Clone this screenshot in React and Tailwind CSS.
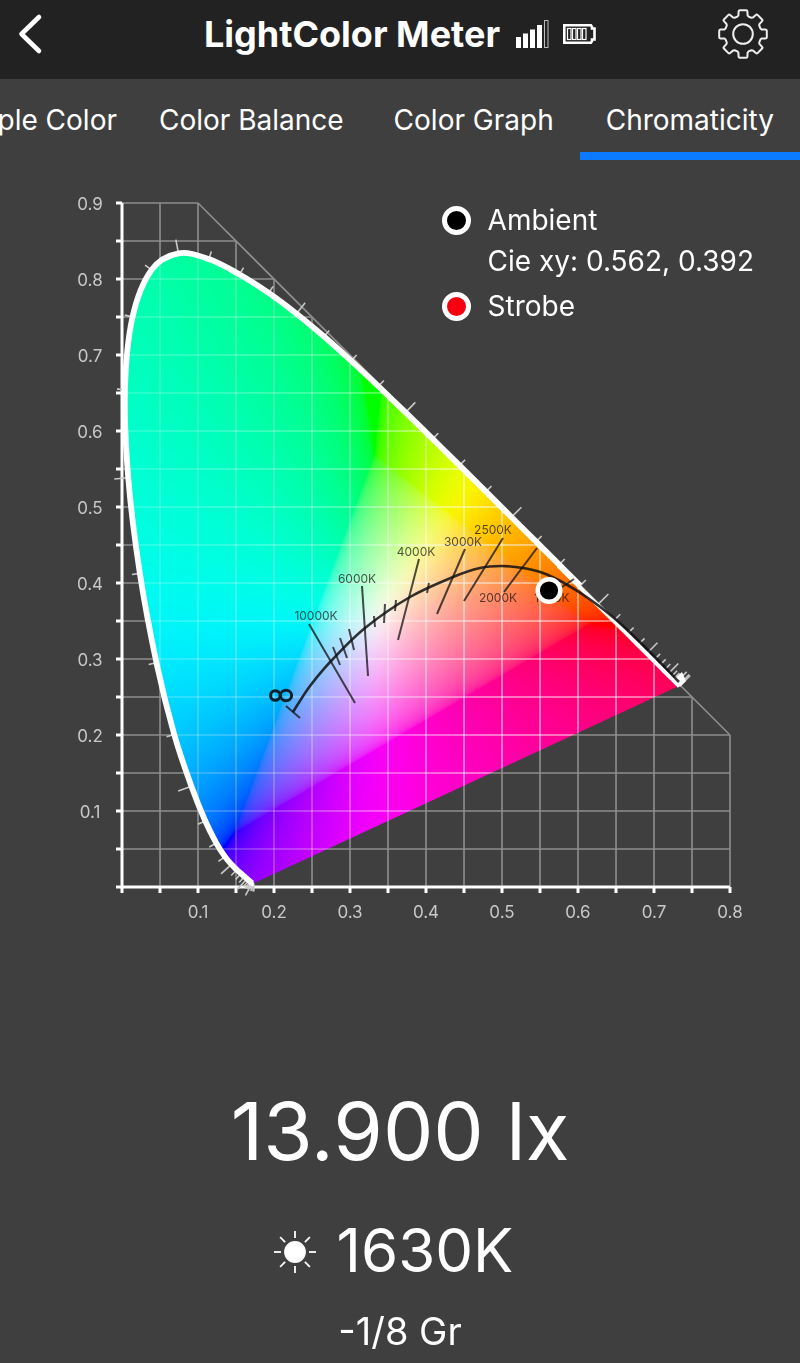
import { useEffect, useRef } from 'react'

// Chart area in drawing units, one diagram unit of 0.1 is 76 units long
const VIEW = { x: 0, y: 160, width: 800, height: 780 }
const ORIGIN = { x: 122, y: 887 }
const UNIT = 760

const px = (x) => ORIGIN.x + x * UNIT
const py = (y) => ORIGIN.y - y * UNIT

// CIE 1931 spectral locus: wavelength, x, y
const LOCUS = [
  [400, 0.1733, 0.0048], [405, 0.173, 0.0048], [410, 0.1726, 0.0048], [415, 0.1721, 0.0048],
  [420, 0.1714, 0.0051], [425, 0.1703, 0.0058], [430, 0.1689, 0.0069], [435, 0.1669, 0.0086],
  [440, 0.1644, 0.0109], [445, 0.1611, 0.0138], [450, 0.1566, 0.0177], [455, 0.151, 0.0227],
  [460, 0.144, 0.0297], [465, 0.1355, 0.0399], [470, 0.1241, 0.0578], [475, 0.1096, 0.0868],
  [480, 0.0913, 0.1327], [485, 0.0687, 0.2007], [490, 0.0454, 0.295], [495, 0.0235, 0.4127],
  [500, 0.0082, 0.5384], [505, 0.0039, 0.6548], [510, 0.0139, 0.7502], [515, 0.0389, 0.812],
  [520, 0.0743, 0.8338], [525, 0.1142, 0.8262], [530, 0.1547, 0.8059], [535, 0.1929, 0.7816],
  [540, 0.2296, 0.7543], [545, 0.2658, 0.7243], [550, 0.3016, 0.6923], [555, 0.3373, 0.6589],
  [560, 0.3731, 0.6245], [565, 0.4087, 0.5896], [570, 0.4441, 0.5547], [575, 0.4788, 0.5202],
  [580, 0.5125, 0.4866], [585, 0.5448, 0.4544], [590, 0.5752, 0.4242], [595, 0.6029, 0.3965],
  [600, 0.627, 0.3725], [605, 0.6482, 0.3514], [610, 0.6658, 0.334], [615, 0.6801, 0.3197],
  [620, 0.6915, 0.3083], [625, 0.7006, 0.2993], [630, 0.7079, 0.292], [635, 0.714, 0.2859],
  [640, 0.719, 0.2809], [645, 0.723, 0.277], [650, 0.726, 0.274], [660, 0.73, 0.27],
  [680, 0.7334, 0.2666], [700, 0.7347, 0.2653],
]

const POINTS = LOCUS.map(([, x, y]) => [px(x), py(y)])

// Smooth curve through all points (Catmull-Rom as bezier segments)
function curve(points) {
  let d = `M${points[0][0]} ${points[0][1]}`
  for (let i = 0; i < points.length - 1; i++) {
    const a = points[i - 1] || points[i]
    const b = points[i]
    const c = points[i + 1]
    const e = points[i + 2] || c
    d += `C${b[0] + (c[0] - a[0]) / 6} ${b[1] + (c[1] - a[1]) / 6} ${c[0] - (e[0] - b[0]) / 6} ${c[1] - (e[1] - b[1]) / 6} ${c[0]} ${c[1]}`
  }
  return d
}

const SPLIT = LOCUS.findIndex((p) => p[0] === 595)
const LOCUS_PATH = curve(POINTS)
const WIDE_PATH = curve(POINTS.slice(0, SPLIT + 1))
const NARROW_PATH = curve(POINTS.slice(SPLIT - 1).map(([x, y]) => [x - 1, y + 1]))

// Wavelength marks, pointing away from the coloured area
const LOCUS_TICKS = LOCUS.map(([nm], i) => {
  const a = POINTS[Math.max(0, i - 1)]
  const b = POINTS[Math.min(POINTS.length - 1, i + 1)]
  const length = Math.hypot(b[0] - a[0], b[1] - a[1]) || 1
  const nx = (b[1] - a[1]) / length
  const ny = -(b[0] - a[0]) / length
  const size = nm % 20 === 0 && nm > 400 ? 14 : 8
  const [x, y] = POINTS[i]
  return { nm, x1: x, y1: y, x2: x + nx * size, y2: y + ny * size }
})

const BLACKBODY = [
  [293, 712], [310, 686], [332, 660], [365, 628], [410, 597], [453, 577], [480, 568], [501, 566],
  [523, 568], [543, 573], [564, 583], [588, 598], [614, 618], [645, 647], [679, 682],
]

const ISOTHERMS = [
  [286, 706, 300, 718], [309, 624, 355, 703], [362, 586, 368, 676], [419, 559, 398, 640],
  [465, 549, 437, 614], [503, 538, 464, 601], [537, 548, 504, 592], [574, 579, 556, 591],
  [333, 647, 340, 665], [340, 638, 347, 658], [349, 629, 354, 650], [374, 616, 375, 627],
  [385, 604, 384, 623], [396, 600, 395, 611], [429, 583, 427, 593],
]

const KELVINS = [
  { label: '10000K', x: 316, y: 620 },
  { label: '6000K', x: 357, y: 583 },
  { label: '4000K', x: 416, y: 556 },
  { label: '3000K', x: 463, y: 546 },
  { label: '2500K', x: 493, y: 534 },
  { label: '2000K', x: 498, y: 602 },
  { label: '1500K', x: 552, y: 602 },
]

const TABS = [
  { label: 'ple Color', padding: 'px-[18px]' },
  { label: 'Color Balance', padding: 'px-6' },
  { label: 'Color Graph', padding: 'px-[26px]' },
  { label: 'Chromaticity', padding: 'px-[26px]' },
]

const RED = [0.615, 0.347, 0.038]
const GREEN = [0.332, 0.57, 0.098]
const BLUE = [0.147, 0.072, 0.781]
const WHITE = [0.335, 0.35, 0.315]

const cross = (a, b) => [a[1] * b[2] - a[2] * b[1], a[2] * b[0] - a[0] * b[2], a[0] * b[1] - a[1] * b[0]]
const dot = (a, b) => a[0] * b[0] + a[1] * b[1] + a[2] * b[2]

// One row per channel, scaled so that the white point gives 1, 1, 1
const ROWS = [cross(GREEN, BLUE), cross(BLUE, RED), cross(RED, GREEN)].map((row) => {
  const scale = dot(row, WHITE)
  return row.map((v) => v / scale)
})

function toRgb(x, y) {
  const rgb = ROWS.map((row) => dot(row, [x, y, 1 - x - y]))
  // lift colours outside the gamut part of the way back in
  const low = Math.min(0, ...rgb) * 0.65
  const lifted = rgb.map((c) => Math.max(0, c - low))
  // a soft maximum keeps yellow, cyan and magenta from showing as bright rays
  const peak = Math.pow(lifted.reduce((sum, c) => sum + Math.pow(c, 8), 0), 1 / 8)
  return lifted.map((c) => 255 * Math.pow(c / peak, 1 / 2.4))
}

function Gamut() {
  const ref = useRef(null)

  useEffect(() => {
    const ctx = ref.current.getContext('2d')
    const { width, height } = VIEW
    const image = ctx.createImageData(width, height)
    for (let row = 0; row < height; row++) {
      for (let col = 0; col < width; col++) {
        const x = (col + VIEW.x - ORIGIN.x) / UNIT
        const y = (ORIGIN.y - row - VIEW.y) / UNIT
        if (x < 0 || y < 0 || x + y > 1.02) continue
        const [r, g, b] = toRgb(x, y)
        const i = (row * width + col) * 4
        image.data[i] = r
        image.data[i + 1] = g
        image.data[i + 2] = b
        image.data[i + 3] = 255
      }
    }
    ctx.putImageData(image, 0, 0)
    ctx.save()
    ctx.globalCompositeOperation = 'destination-in'
    ctx.translate(-VIEW.x, -VIEW.y)
    ctx.fill(new Path2D(LOCUS_PATH + 'Z'))
    ctx.restore()
  }, [])

  return <canvas ref={ref} width={VIEW.width} height={VIEW.height} className="[grid-area:1/1] w-full" />
}

const X_STEPS = Array.from({ length: 17 }, (_, i) => i / 20)
const Y_STEPS = Array.from({ length: 19 }, (_, i) => i / 20)

function GridLines() {
  return (
    <>
      {X_STEPS.slice(1).map((x) => (
        <line key={x} x1={px(x)} x2={px(x)} y1={py(0)} y2={py(Math.min(0.9, 1 - x))} />
      ))}
      {Y_STEPS.slice(1).map((y) => (
        <line key={y} x1={px(0)} x2={px(Math.min(0.8, 1 - y))} y1={py(y)} y2={py(y)} />
      ))}
      <line x1={px(0.1)} y1={py(0.9)} x2={px(0.8)} y2={py(0.2)} />
    </>
  )
}

function Diagram() {
  return (
    <svg
      viewBox={`${VIEW.x} ${VIEW.y} ${VIEW.width} ${VIEW.height}`}
      className="[grid-area:1/1] w-full"
      fill="none"
      role="img"
      aria-label="Chromaticity"
    >
      <defs>
        <clipPath id="inside">
          <path d={LOCUS_PATH + 'Z'} />
        </clipPath>
        <clipPath id="outside">
          <path clipRule="evenodd" d={`M0 160H800V940H0Z${LOCUS_PATH}Z`} />
        </clipPath>
        <linearGradient id="fade" gradientUnits="userSpaceOnUse" x1="120" y1="0" x2="480" y2="0">
          <stop offset="0" stopColor="#fff" stopOpacity="0.14" />
          <stop offset="0.5" stopColor="#fff" stopOpacity="0.24" />
          <stop offset="1" stopColor="#fff" stopOpacity="0.45" />
        </linearGradient>
      </defs>

      {/* Grid */}
      <g clipPath="url(#outside)" stroke="#8e8e8e" strokeWidth="1.6">
        <GridLines />
      </g>
      <g clipPath="url(#inside)" stroke="url(#fade)" strokeWidth="2">
        <GridLines />
      </g>

      {/* Axes */}
      <g stroke="#fff" strokeWidth="3">
        <path d={`M${px(0)} ${py(0.9)}V${py(0)}H${px(0.8)}`} />
        {X_STEPS.map((x) => (
          <line key={x} x1={px(x)} x2={px(x)} y1={py(0)} y2={py(0) + 6} />
        ))}
        {Y_STEPS.map((y) => (
          <line key={y} x1={px(0) - 6} x2={px(0)} y1={py(y)} y2={py(y)} />
        ))}
      </g>
      <g fill="#c8c8c8" fontSize="17" textAnchor="middle">
        {X_STEPS.slice(1).filter((x, i) => i % 2).map((x) => (
          <text key={x} x={px(x)} y="918">{x.toFixed(1)}</text>
        ))}
        {Y_STEPS.slice(1).filter((y, i) => i % 2).map((y) => (
          <text key={y} x="90" y={py(y) + 7}>{y.toFixed(1)}</text>
        ))}
      </g>

      {/* Spectral locus */}
      <g stroke="#c9c9c9" strokeWidth="1.6">
        {LOCUS_TICKS.map((t) => (
          <line key={t.nm} x1={t.x1} y1={t.y1} x2={t.x2} y2={t.y2} />
        ))}
      </g>
      <path d={NARROW_PATH} stroke="#fff" strokeWidth="4" />
      <path d={WIDE_PATH} stroke="#fff" strokeWidth="5.8" />
      <path d="M674 679L680 687L686 681L682 672Z" fill="#fff" />

      {/* Black body curve */}
      <path d={curve(BLACKBODY)} stroke="#111" strokeOpacity="0.85" strokeWidth="2.6" />
      <g stroke="#111" strokeOpacity="0.75" strokeWidth="2">
        {ISOTHERMS.map(([x1, y1, x2, y2]) => (
          <line key={`${x1}-${y1}`} x1={x1} y1={y1} x2={x2} y2={y2} />
        ))}
      </g>
      <g fill="#111" fillOpacity="0.72" fontSize="12" textAnchor="middle">
        {KELVINS.map((k) => (
          <text key={k.label} x={k.x} y={k.y}>{k.label}</text>
        ))}
      </g>
      <g stroke="#10202a" strokeWidth="3">
        <ellipse cx="275.3" cy="695.5" rx="4.8" ry="4.8" />
        <ellipse cx="286" cy="695.5" rx="5.6" ry="5.2" />
      </g>

      {/* Measured point */}
      <circle cx="549" cy="590.5" r="11.3" fill="#000" stroke="#fff" strokeWidth="4.4" />
    </svg>
  )
}

function GearIcon() {
  let d = ''
  for (let i = 0; i < 8; i++) {
    const a = (i * Math.PI) / 4
    const at = (x, y) =>
      `${(25 + x * Math.cos(a) - y * Math.sin(a)).toFixed(2)} ${(25 + x * Math.sin(a) + y * Math.cos(a)).toFixed(2)}`
    d += `${i ? 'L' : 'M'}${at(-5.6, -17.4)}L${at(-4.6, -18.6)}L${at(-4.4, -22.6)}Q${at(-4.3, -23.8)} ${at(-3.2, -23.8)}L${at(3.2, -23.8)}Q${at(4.3, -23.8)} ${at(4.4, -22.6)}L${at(4.6, -18.6)}L${at(5.6, -17.4)}`
  }
  return (
    <svg viewBox="0 0 50 50" className="size-[50px]" fill="none" stroke="#eeeeee" strokeWidth="2" strokeLinejoin="round">
      <path d={d + 'Z'} />
      <circle cx="25" cy="25" r="9.8" />
    </svg>
  )
}

function SignalIcon() {
  return (
    <svg viewBox="0 0 33 28" className="h-7 w-[33px]" fill="#fff">
      <rect x="0" y="17" width="5" height="11" />
      <rect x="7" y="13.500" width="5" height="14.500" />
      <rect x="14" y="9.500" width="5" height="18.500" />
      <rect x="21" y="5" width="5" height="23" />
      <rect x="28.500" y="0.500" width="3.500" height="27" fill="none" stroke="#bbb" strokeWidth="1" />
    </svg>
  )
}

function BatteryIcon() {
  return (
    <svg viewBox="0 0 33 20" className="h-5 w-[33px]" fill="none" stroke="#fff">
      <path d="M1.300 1.300H28L29 3V4.500H31.500V15.500H29V17L28 18.700H1.300Z" strokeWidth="2.600" />
      {[4.5, 9.5, 14.5, 19.5].map((x) => (
        <rect key={x} x={x} y="4.500" width="3.500" height="11" strokeWidth="1.2" />
      ))}
    </svg>
  )
}

function SunIcon() {
  return (
    <svg viewBox="-22 -22 44 44" className="mt-1 size-11" fill="#fff" stroke="#fff" strokeWidth="1.8">
      <circle r="10" />
      {[0, 45, 90, 135, 180, 225, 270, 315].map((angle) => (
        <line key={angle} y1="-14" y2="-21" transform={`rotate(${angle})`} />
      ))}
    </svg>
  )
}

function LegendDot({ className }) {
  return <span className={`size-[29px] shrink-0 rounded-full border-[5px] border-white ${className}`} />
}

function App() {
  return (
    <div className="min-h-screen overflow-x-hidden bg-[#3f3f3f] font-['Inter','Liberation_Sans',sans-serif] text-white">
      <header className="flex h-[79px] items-start justify-between bg-[#222222] px-4 pt-2">
        <button type="button" aria-label="Back" className="flex h-[52px] w-[82px] items-center">
          <svg viewBox="0 0 44 44" className="size-11" fill="none" stroke="#fff" strokeWidth="4.6" strokeLinecap="round" strokeLinejoin="round">
            <path d="M23 5L5.500 22L23 39" />
          </svg>
        </button>
        <div className="flex h-[52px] items-center">
          <h1 className="mr-4 text-[36px] leading-[52px] font-bold whitespace-nowrap">LightColor Meter</h1>
          <span className="mr-3.5"><SignalIcon /></span>
          <BatteryIcon />
        </div>
        <button type="button" aria-label="Settings" className="flex h-[52px] w-[82px] items-center justify-center">
          <GearIcon />
        </button>
      </header>

      <nav role="tablist" className="flex h-[81px] justify-end">
        {TABS.map((tab) => (
          <button
            key={tab.label}
            type="button"
            role="tab"
            aria-selected={tab.label === 'Chromaticity'}
            className={`shrink-0 border-b-8 pt-2 text-[28px] whitespace-nowrap ${tab.padding} ${
              tab.label === 'Chromaticity' ? 'border-[#0a7aff]' : 'border-transparent'
            }`}
          >
            {tab.label}
          </button>
        ))}
      </nav>

      <main>
        <section className="grid">
          <Gamut />
          <Diagram />
          <ul className="[grid-area:1/1] mt-10 mr-[46px] justify-self-end text-[28px] leading-[41px]">
            <li className="flex items-center gap-[17px]"><LegendDot className="bg-black" />Ambient</li>
            <li className="mb-1 pl-[46px]">Cie xy: 0.562, 0.392</li>
            <li className="flex items-center gap-[17px]"><LegendDot className="bg-[#f5000f]" />Strobe</li>
          </ul>
        </section>

        <section className="flex flex-col items-center pt-[141px]">
          <p className="mb-[33px] text-[80px] leading-[100px]">13.900 lx</p>
          <div className="mb-5 flex items-center gap-5 pr-3.5">
            <SunIcon />
            <p className="text-[60px] leading-[72px]">1630K</p>
          </div>
          <p className="text-[38px] leading-[50px]">-1/8 Gr</p>
        </section>
      </main>
    </div>
  )
}

export default App
